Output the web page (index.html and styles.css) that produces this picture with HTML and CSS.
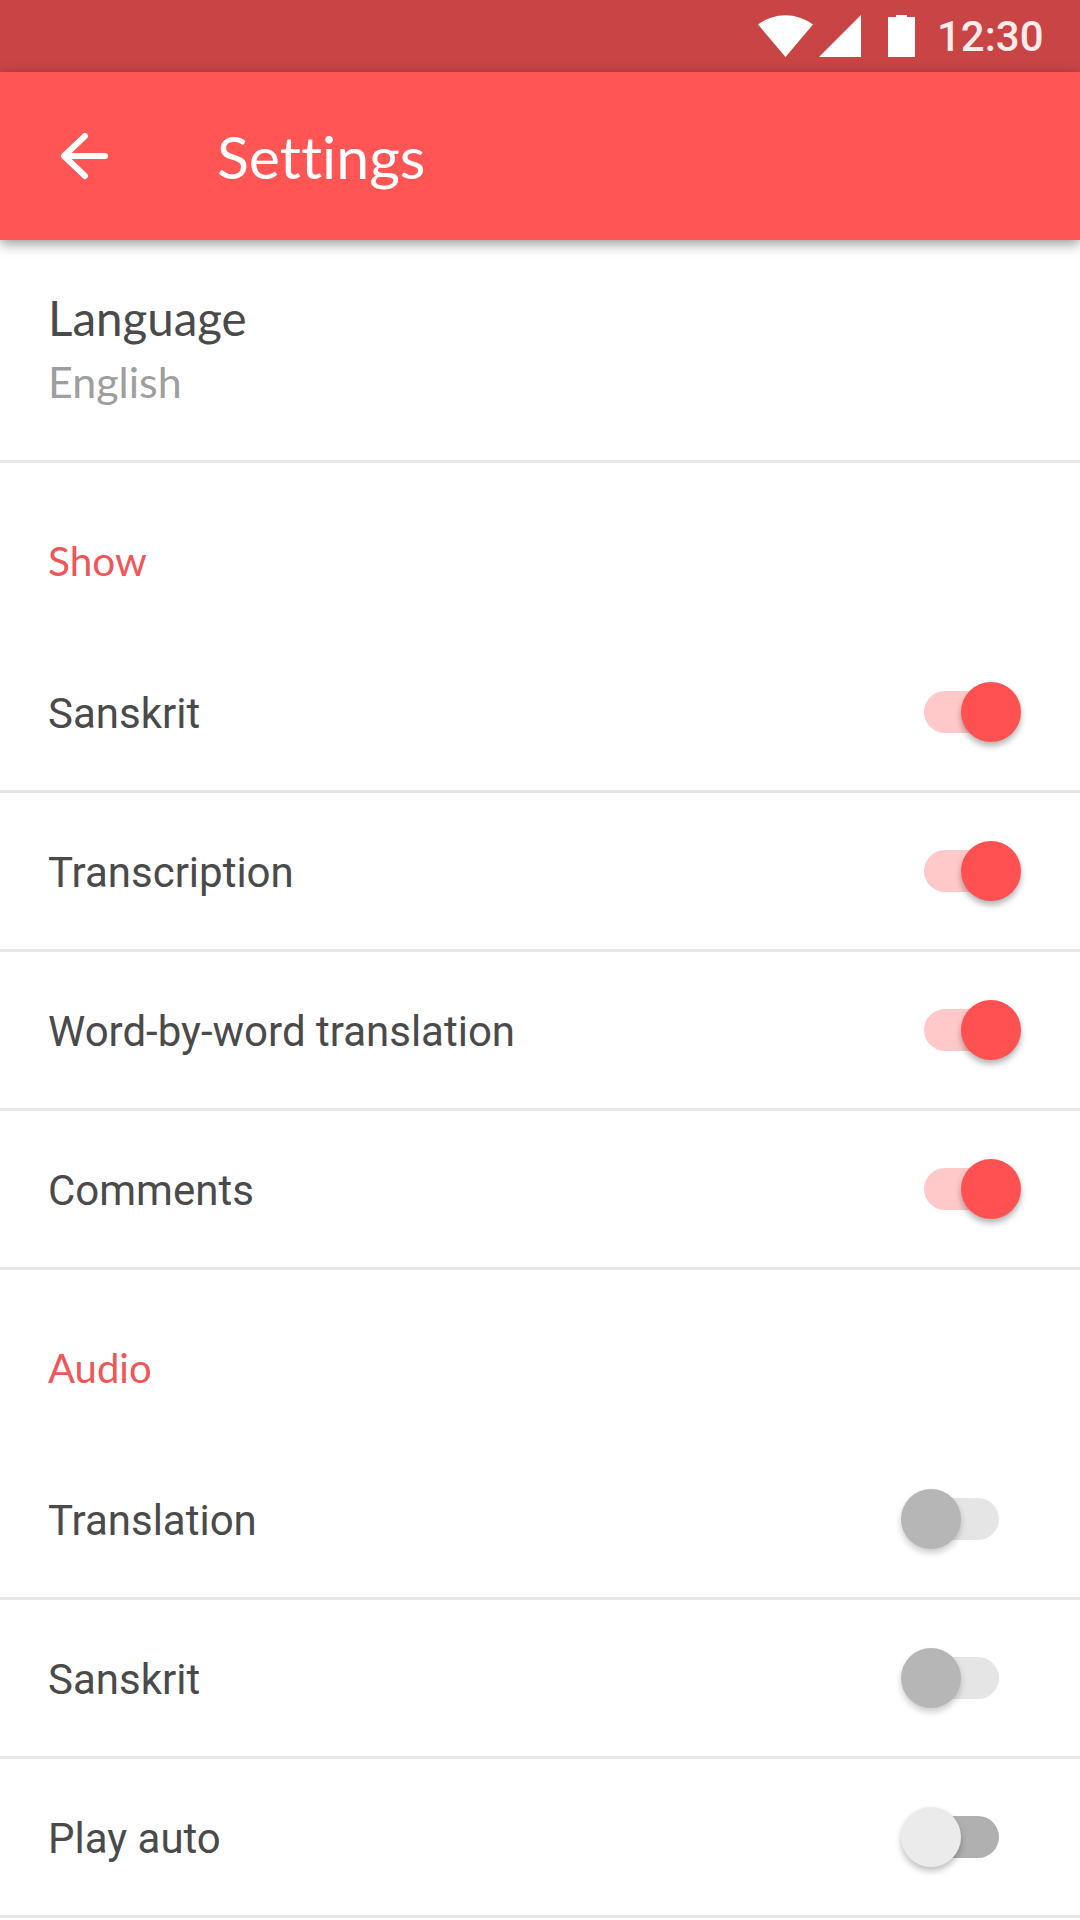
FILE: index.html
```html
<!DOCTYPE html>
<html>
<head>
<meta charset="UTF-8">
<title>Settings</title>
<link rel="stylesheet" href="styles.css">
</head>
<body>
	<div class="statusBar">
		<svg class="wifiIcon" width="55" height="42" viewBox="0 0 55 42"><path d="M0 9.5A46 46 0 0 1 55 9.5L27.5 42Z" fill="#fff"/></svg>
		<svg class="signalIcon" width="42" height="42" viewBox="0 0 42 42"><path d="M42 0V42H0Z" fill="#fff"/></svg>
		<svg class="batteryIcon" width="27" height="42" viewBox="0 0 27 42"><path d="M8 2V0H19V2H27V42H0V2Z" fill="#fff"/></svg>
		<span class="clock">12:30</span>
	</div>
	<div class="appBar">
		<svg class="backIcon" width="50" height="48" viewBox="0 0 50 48"><path d="M5 24H46M26 4L5 24L26 44" fill="none" stroke="#fff" stroke-width="6" stroke-linecap="round" stroke-linejoin="round"/></svg>
		<span class="appTitle">Settings</span>
	</div>
	<div class="languageBox">
		<div class="languageTitle">Language</div>
		<div class="languageValue">English</div>
	</div>
	<div class="sectionTitle">Show</div>
	<div class="settingRow"><span>Sanskrit</span><div class="toggle toggleOn"><i></i></div></div>
	<div class="settingRow"><span>Transcription</span><div class="toggle toggleOn"><i></i></div></div>
	<div class="settingRow"><span>Word-by-word translation</span><div class="toggle toggleOn"><i></i></div></div>
	<div class="settingRow"><span>Comments</span><div class="toggle toggleOn"><i></i></div></div>
	<div class="sectionTitle audioTitle">Audio</div>
	<div class="settingRow"><span>Translation</span><div class="toggle toggleOff"><i></i></div></div>
	<div class="settingRow"><span>Sanskrit</span><div class="toggle toggleOff"><i></i></div></div>
	<div class="settingRow"><span>Play auto</span><div class="toggle toggleIdle"><i></i></div></div>
</body>
</html>
```

FILE: styles.css
```css
html, body {
	margin: 0px;
	padding: 0px;
	background-color: #fff;
}

body {
	width: 1080px;
	height: 1920px;
	overflow: hidden;
}

.statusBar {
	height: 72px;
	box-sizing: border-box;
	padding: 15px 38px 0px 0px;
	display: flex;
	justify-content: flex-end;
	align-items: flex-start;
	background-color: #c94445;
}

.signalIcon {
	margin-left: 6px;
}

.batteryIcon {
	margin-left: 27px;
}

.clock {
	margin-left: 22px;
	margin-top: 1px;
	width: 105px;
	font-family: Roboto, sans-serif;
	font-size: 42px;
	font-weight: 500;
	line-height: 42px;
	color: #fdeaea;
}

.appBar {
	height: 168px;
	box-sizing: border-box;
	padding-left: 59px;
	display: flex;
	align-items: center;
	position: relative;
	background-color: #ff5555;
	box-shadow: 0px 4px 12px rgba(0, 0, 0, 0.4);
}

.appTitle {
	margin-left: 108px;
	font-family: Lato, sans-serif;
	font-size: 59px;
	font-variant-ligatures: none;
	color: #fff;
}

.languageBox {
	height: 223px;
	box-sizing: border-box;
	padding: 48px 48px 0px;
	border-bottom: 3px solid #e6e6e6;
	font-family: Lato, sans-serif;
	font-variant-ligatures: none;
}

.languageTitle {
	font-size: 47.5px;
	line-height: 60px;
	color: #4a4a4a;
}

.languageValue {
	margin-top: 6px;
	font-size: 43px;
	line-height: 56px;
	color: #9e9e9e;
}

.sectionTitle {
	height: 171px;
	box-sizing: border-box;
	padding: 72px 48px 0px;
	font-family: Lato, sans-serif;
	font-size: 40.5px;
	line-height: 52px;
	color: #f05558;
}

.audioTitle {
	font-size: 40px;
}

.settingRow {
	height: 159px;
	box-sizing: border-box;
	padding: 2px 81px 0px 48px;
	display: flex;
	justify-content: space-between;
	align-items: center;
	border-bottom: 3px solid #e6e6e6;
	font-family: Roboto, sans-serif;
	font-size: 42px;
	color: #4a4a4a;
}

.toggle {
	width: 75px;
	height: 42px;
	margin-top: -2px;
	border-radius: 21px;
	position: relative;
}

.toggle i {
	width: 60px;
	height: 60px;
	border-radius: 50%;
	position: absolute;
	top: -9px;
}

.toggleOn {
	background-color: #ffc9ca;
}

.toggleOn i {
	right: -22px;
	background-color: #ff5052;
	box-shadow: 0px 4px 6px rgba(0, 0, 0, 0.3);
}

.toggleOff {
	background-color: #e5e5e5;
}

.toggleOff i {
	left: -23px;
	background-color: #b6b6b6;
	box-shadow: 0px 4px 6px rgba(0, 0, 0, 0.2);
}

.toggleIdle {
	background-color: #b0b0b0;
}

.toggleIdle i {
	left: -23px;
	background-color: #ebebeb;
	box-shadow: 0px 4px 6px rgba(0, 0, 0, 0.25);
}
```
